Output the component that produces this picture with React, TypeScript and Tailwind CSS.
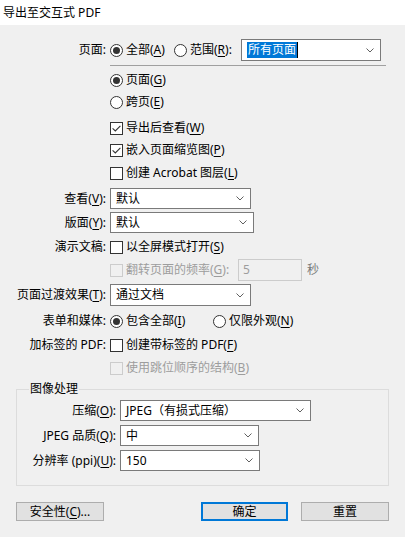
import React from "react";

function U({ c }: { c: string }) {
  return <span className="underline underline-offset-[2px]">{c}</span>;
}

function Radio({ checked }: { checked?: boolean }) {
  return (
    <span className="flex h-[13px] w-[13px] shrink-0 items-center justify-center rounded-full border border-[#333333] bg-white">
      {checked && <span className="h-[7px] w-[7px] rounded-full bg-[#333333]" />}
    </span>
  );
}

function Check({ checked, disabled }: { checked?: boolean; disabled?: boolean }) {
  return (
    <span
      className={`flex h-[13px] w-[13px] shrink-0 items-center justify-center border ${
        disabled ? "border-[#cccccc] bg-transparent" : "border-[#333333] bg-white"
      }`}
    >
      {checked && (
        <svg width="9" height="7" viewBox="0 0 9 7">
          <path d="M0.6 3.4 L3.3 6 L8.4 0.8" fill="none" stroke="#333333" strokeWidth="1.1" />
        </svg>
      )}
    </span>
  );
}

function Chevron() {
  return (
    <svg width="8" height="5" viewBox="0 0 8 5" className="shrink-0">
      <path d="M0.5 0.5 L4 4 L7.5 0.5" fill="none" stroke="#606060" strokeWidth="1" />
    </svg>
  );
}

function Select({ className, children }: { className: string; children: React.ReactNode }) {
  return (
    <div className={`flex items-center justify-between border border-[#7a7a7a] bg-white pl-[5px] pr-[6px] ${className}`}>
      <span className="flex items-center">{children}</span>
      <Chevron />
    </div>
  );
}

function Row({ label, className = "", children }: { label?: React.ReactNode; className?: string; children: React.ReactNode }) {
  return (
    <div className={`flex h-[22px] items-center ${className}`}>
      <div className="w-[106px] shrink-0 text-right">{label}</div>
      <div className="ml-[4px] flex items-center">{children}</div>
    </div>
  );
}

function GroupRow({ label, className = "", children }: { label: React.ReactNode; className?: string; children: React.ReactNode }) {
  return (
    <div className={`flex items-center ${className}`}>
      <div className="w-[99px] shrink-0 text-right">{label}</div>
      <div className="ml-[4px] flex items-center">{children}</div>
    </div>
  );
}

function Item({ children, className = "" }: { children: React.ReactNode; className?: string }) {
  return <span className={`flex shrink-0 items-center gap-[3px] ${className}`}>{children}</span>;
}

export default function App() {
  return (
    <div className="h-[537px] w-[405px] overflow-hidden bg-[#f0f0f0] text-[12px] leading-[16px] text-black [font-family:'Noto_Sans','Noto_Sans_CJK_SC',sans-serif]">
      <div className="flex h-[25px] items-center bg-white pl-[3px]">导出至交互式 PDF</div>

      <Row label="页面:" className="mt-[14px]">
        <Item className="w-[64px]">
          <Radio checked />
          <span>
            全部(<U c="A" />)
          </span>
        </Item>
        <Item className="w-[67px]">
          <Radio />
          <span>
            范围(<U c="R" />):
          </span>
        </Item>
        <Select className="h-[22px] w-[140px]">
          <span className="bg-[#0078d7] px-[1px] text-white">所有页面</span>
          <span className="h-[16px] w-px bg-black" />
        </Select>
      </Row>

      <div className="ml-[110px] mt-[4px] h-px w-[276px] bg-[#a0a0a0]" />

      <Row className="mt-[3px]">
        <Item>
          <Radio checked />
          <span>
            页面(<U c="G" />)
          </span>
        </Item>
      </Row>
      <Row>
        <Item>
          <Radio />
          <span>
            跨页(<U c="E" />)
          </span>
        </Item>
      </Row>
      <Row className="mt-[4px]">
        <Item>
          <Check checked />
          <span>
            导出后查看(<U c="W" />)
          </span>
        </Item>
      </Row>
      <Row>
        <Item>
          <Check checked />
          <span>
            嵌入页面缩览图(<U c="P" />)
          </span>
        </Item>
      </Row>
      <Row className="mt-[1px]">
        <Item>
          <Check />
          <span>
            创建 Acrobat 图层(<U c="L" />)
          </span>
        </Item>
      </Row>

      <Row
        className="mt-[4px] !h-[21px]"
        label={
          <span>
            查看(<U c="V" />):
          </span>
        }
      >
        <Select className="h-[21px] w-[141px]">默认</Select>
      </Row>
      <Row
        className="mt-[3px] !h-[21px]"
        label={
          <span>
            版面(<U c="Y" />):
          </span>
        }
      >
        <Select className="h-[21px] w-[144px]">默认</Select>
      </Row>

      <Row label="演示文稿:" className="mt-[3px]">
        <Item>
          <Check />
          <span>
            以全屏模式打开(<U c="S" />)
          </span>
        </Item>
      </Row>
      <Row className="mt-[1px]">
        <Item className="w-[128px] text-[#9d9d9d]">
          <Check disabled />
          <span>
            翻转页面的频率(<U c="G" />):
          </span>
        </Item>
        <div className="flex h-[22px] w-[64px] items-center border border-[#cccccc] pl-[4px] text-[#9d9d9d]">5</div>
        <span className="ml-[5px] text-[#7a7a7a]">秒</span>
      </Row>

      <Row
        className="mt-[3px]"
        label={
          <span>
            页面过渡效果(<U c="T" />):
          </span>
        }
      >
        <Select className="h-[22px] w-[141px]">通过文档</Select>
      </Row>

      <Row label="表单和媒体:" className="mt-[4px]">
        <Item className="w-[103px]">
          <Radio checked />
          <span>
            包含全部(<U c="I" />)
          </span>
        </Item>
        <Item>
          <Radio />
          <span>
            仅限外观(<U c="N" />)
          </span>
        </Item>
      </Row>
      <Row label="加标签的 PDF:" className="mt-[2px]">
        <Item>
          <Check />
          <span>
            创建带标签的 PDF(<U c="F" />)
          </span>
        </Item>
      </Row>
      <Row className="mt-[1px]">
        <Item className="text-[#9d9d9d]">
          <Check disabled />
          <span>
            使用跳位顺序的结构(<U c="B" />)
          </span>
        </Item>
      </Row>

      <fieldset className="mx-[16px] mt-[2px] border border-[#dcdcdc] pb-[14px]">
        <legend className="ml-[12px] px-[1px]">图像处理</legend>
        <GroupRow
          className="mt-[3px]"
          label={
            <span>
              压缩(<U c="O" />):
            </span>
          }
        >
          <Select className="h-[21px] w-[191px]">JPEG（有损式压缩）</Select>
        </GroupRow>
        <GroupRow
          className="mt-[4px]"
          label={
            <span>
              JPEG 品质(<U c="Q" />):
            </span>
          }
        >
          <Select className="h-[21px] w-[139px]">中</Select>
        </GroupRow>
        <GroupRow
          className="mt-[4px]"
          label={
            <span>
              分辨率 (ppi)(<U c="U" />):
            </span>
          }
        >
          <Select className="h-[21px] w-[140px]">150</Select>
        </GroupRow>
      </fieldset>

      <div className="mt-[16px] flex pl-[16px] pr-[16px]">
        <button className="flex h-[19px] w-[88px] items-center justify-center border border-[#adadad] bg-[#e1e1e1]">
          安全性(<U c="C" />)...
        </button>
        <button className="ml-auto flex h-[19px] w-[87px] items-center justify-center border-2 border-[#0078d7] bg-[#e1e1e1]">
          确定
        </button>
        <button className="ml-[13px] flex h-[19px] w-[88px] items-center justify-center border border-[#adadad] bg-[#e1e1e1]">
          重置
        </button>
      </div>
    </div>
  );
}
